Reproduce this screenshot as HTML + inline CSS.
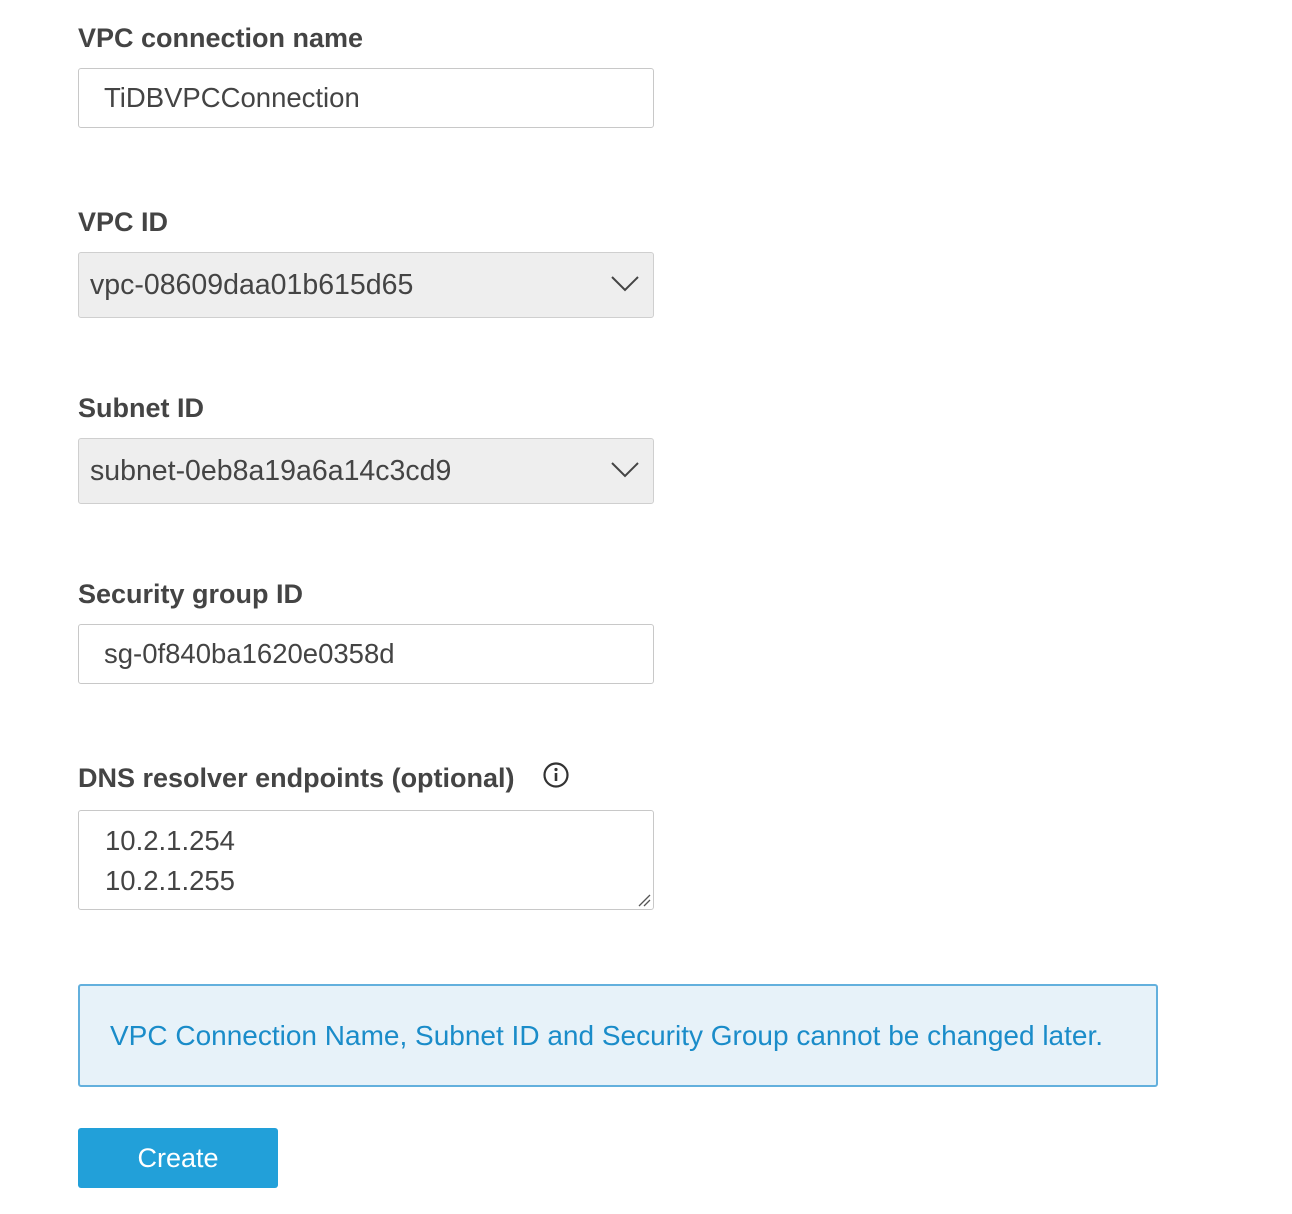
<!DOCTYPE html>
<html><head><meta charset="utf-8"><style>
body{margin:0;width:1292px;height:1214px;background:#fff;font-family:"Liberation Sans",sans-serif;position:relative;overflow:hidden}
.l{position:absolute;left:78px;font-weight:bold;font-size:27px;color:#444;line-height:30px}
.box{position:absolute;left:78px;width:576px;border:1px solid #c8c8c8;border-radius:3px;box-sizing:border-box;color:#444;font-size:27.5px}
.in{height:60px;line-height:58px;padding-left:25px}
.sel{height:66px;line-height:64px;padding-left:11px;background:#eee;border-color:#cfcfcf;font-size:28.5px}
.sel svg{position:absolute;right:14px;top:23px}
</style></head><body>
<div class="l" style="top:23px">VPC connection name</div>
<div class="box in" style="top:68px">TiDBVPCConnection</div>
<div class="l" style="top:207px">VPC ID</div>
<div class="box sel" style="top:252px">vpc-08609daa01b615d65<svg width="28" height="16" viewBox="0 0 28 16"><path d="M1 1L14 14L27 1" fill="none" stroke="#444" stroke-width="2"/></svg></div>
<div class="l" style="top:393px">Subnet ID</div>
<div class="box sel" style="top:438px">subnet-0eb8a19a6a14c3cd9<svg width="28" height="16" viewBox="0 0 28 16"><path d="M1 1L14 14L27 1" fill="none" stroke="#444" stroke-width="2"/></svg></div>
<div class="l" style="top:579px">Security group ID</div>
<div class="box in" style="top:624px">sg-0f840ba1620e0358d</div>
<div class="l" style="top:763px">DNS resolver endpoints (optional)</div>
<svg style="position:absolute;left:542px;top:761px" width="28" height="28" viewBox="0 0 28 28"><circle cx="14" cy="14" r="11.5" fill="none" stroke="#333" stroke-width="2.2"/><circle cx="14" cy="8.5" r="1.6" fill="#333"/><path d="M14 12v8" stroke="#333" stroke-width="2.6"/></svg>
<div class="box" style="top:810px;height:100px;padding:10px 0 0 26px;line-height:40px">10.2.1.254<br>10.2.1.255
<svg style="position:absolute;right:2px;bottom:2px" width="14" height="14" viewBox="0 0 14 14"><path d="M2 13L13 2M7 13L13 7" stroke="#555" stroke-width="1.3"/></svg></div>
<div style="position:absolute;left:78px;top:984px;width:1080px;height:103px;box-sizing:border-box;border:2px solid #63b0dd;border-radius:3px;background:#e7f2f9;color:#1a8cc9;font-size:28px;line-height:99px;padding-left:30px">VPC Connection Name, Subnet ID and Security Group cannot be changed later.</div>
<div style="position:absolute;left:78px;top:1128px;width:200px;height:60px;background:#22a0d9;border-radius:3px;color:#fff;font-size:27px;line-height:60px;text-align:center">Create</div>
</body></html>
